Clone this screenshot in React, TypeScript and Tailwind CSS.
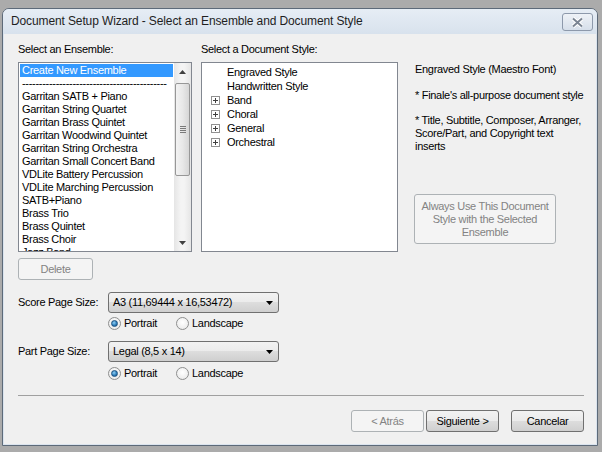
import React from "react";

/* ================== DATA ================== */
const ensembles = [
  "Create New Ensemble",
  "-------------------------------------------",
  "Garritan SATB + Piano",
  "Garritan String Quartet",
  "Garritan Brass Quintet",
  "Garritan Woodwind Quintet",
  "Garritan String Orchestra",
  "Garritan Small Concert Band",
  "VDLite Battery Percussion",
  "VDLite Marching Percussion",
  "SATB+Piano",
  "Brass Trio",
  "Brass Quintet",
  "Brass Choir",
  "Jazz Band",
];

const styles = [
  { name: "Engraved Style", group: false },
  { name: "Handwritten Style", group: false },
  { name: "Band", group: true },
  { name: "Choral", group: true },
  { name: "General", group: true },
  { name: "Orchestral", group: true },
];

const btnFace =
  "bg-[linear-gradient(180deg,#f2f2f2_0%,#ebebeb_49%,#dddddd_50%,#cfcfcf_100%)] border border-[#707070] rounded-[3px]";
const btnDisabled = "bg-[#f4f4f4] border border-[#adb2b5] rounded-[3px] text-[#838383]";

/* ================== PIECES ================== */
const Radio: React.FC<{ checked?: boolean; label: string; className?: string }> = ({ checked, label, className }) => (
  <div className={"flex items-center h-[13px] " + (className ?? "")}>
    <div className="w-[13px] h-[13px] rounded-full border border-[#8e8f8f] bg-[radial-gradient(circle_at_50%_40%,#ffffff,#e6e6e6)] flex items-center justify-center">
      {checked && (
        <div className="w-[7px] h-[7px] rounded-full border border-[#1c5180] bg-[radial-gradient(circle_at_40%_35%,#8fd0f5,#2a7ab8_60%,#155086)]" />
      )}
    </div>
    <span className="ml-[3px]">{label}</span>
  </div>
);

const Combo: React.FC<{ value: string }> = ({ value }) => (
  <div className="w-[171px] h-[21px] border border-[#707070] rounded-[3px] bg-[linear-gradient(180deg,#f2f2f2_0%,#ebebeb_49%,#dddddd_50%,#cfcfcf_100%)] flex items-center pl-[4px] pr-[5px]">
    <span className="flex-1">{value}</span>
    <svg width="7" height="4" viewBox="0 0 7 4">
      <path d="M0 0h7L3.5 4z" fill="#000" />
    </svg>
  </div>
);

/* ================== COMPONENT ================== */
const App: React.FC = () => {
  return (
    <div className="w-[602px] h-[452px] bg-[#ababab] pt-[8px] pl-[2px] overflow-hidden font-['Liberation_Sans',Arial,sans-serif] text-[11px] leading-[13px] tracking-[-0.3px] text-black">
      <div className="w-[596px] h-[438px] border border-[#5d6a79] rounded-t-[7px] flex flex-col bg-[#dbe4ee] overflow-hidden">
        {/* Title bar */}
        <div className="h-[25px] shrink-0 flex items-start bg-[linear-gradient(180deg,#e6edf5,#d8e2ed)]">
          <span className="pl-[8px] pt-[5px] text-[12px] leading-[15px] tracking-[-0.12px] text-[#1e1e1e] flex-1">
            Document Setup Wizard - Select an Ensemble and Document Style
          </span>
          <div className="mt-[4px] mr-[4px] w-[31px] h-[18px] rounded-[3px] border border-[#8d99ab] bg-[linear-gradient(180deg,#eef2f7,#d6dfea)] flex items-center justify-center">
            <svg width="13" height="11" viewBox="0 0 13 11">
              <path d="M2 1.5l4.5 4 4.5-4M2 9.5l4.5-4 4.5 4" stroke="#ffffff" strokeWidth="4" fill="none" />
              <path d="M2 1.5l4.5 4 4.5-4M2 9.5l4.5-4 4.5 4" stroke="#7b8593" strokeWidth="2" fill="none" />
            </svg>
          </div>
        </div>

        {/* Body */}
        <div className="flex-1 mx-[1px] mb-[1px] bg-[#f0f0f0] pl-[14px] pt-[9px] flex flex-col">
          {/* Labels */}
          <div className="flex h-[13px]">
            <span className="w-[183px]">Select an Ensemble:</span>
            <span>Select a Document Style:</span>
          </div>

          {/* Top row */}
          <div className="flex mt-[6px] h-[190px]">
            {/* Ensemble list */}
            <div className="w-[174px] h-[190px] border border-[#828790] bg-white flex">
              <div className="flex-1 p-[1px] overflow-hidden">
                {ensembles.map((e, i) => (
                  <div
                    key={i}
                    className={"h-[13px] pl-[2px] whitespace-nowrap overflow-hidden " + (i === 0 ? "bg-[#3399ff] text-white" : "")}
                  >
                    {e}
                  </div>
                ))}
              </div>
              {/* Scrollbar */}
              <div className="w-[17px] bg-[linear-gradient(90deg,#e5e5e5,#f4f4f4_40%,#f4f4f4_60%,#e5e5e5)] flex flex-col items-center">
                <div className="h-[17px] w-full flex items-center justify-center">
                  <svg width="7" height="4" viewBox="0 0 7 4">
                    <path d="M3.5 0L7 4H0z" fill="#404040" />
                  </svg>
                </div>
                <div className="mt-[3px] w-[15px] h-[93px] rounded-[2px] border border-[#979797] bg-[linear-gradient(90deg,#f3f3f3,#e8e8e8_50%,#d6d6d6)] flex flex-col items-center justify-center gap-[1px]">
                  {[0, 1, 2, 3].map((g) => (
                    <div key={g} className="w-[6px] h-[1px] bg-[#7a7a7a]" />
                  ))}
                </div>
                <div className="flex-1" />
                <div className="h-[17px] w-full flex items-center justify-center">
                  <svg width="7" height="4" viewBox="0 0 7 4">
                    <path d="M0 0h7L3.5 4z" fill="#404040" />
                  </svg>
                </div>
              </div>
            </div>

            {/* Style tree */}
            <div className="ml-[9px] w-[197px] h-[190px] border border-[#828790] bg-white pt-[2px]">
              {styles.map((s) => (
                <div key={s.name} className="h-[14px] flex items-center pl-[9px]">
                  {s.group ? (
                    <div className="w-[9px] h-[9px] border border-[#919191] flex items-center justify-center relative">
                      <div className="w-[5px] h-[1px] bg-[#404040]" />
                      <div className="absolute w-[1px] h-[5px] bg-[#404040]" />
                    </div>
                  ) : (
                    <div className="w-[9px]" />
                  )}
                  <span className="ml-[7px]">{s.name}</span>
                </div>
              ))}
            </div>

            {/* Description */}
            <div className="ml-[17px] flex flex-col">
              <div className="mt-[1px]">Engraved Style (Maestro Font)</div>
              <div className="mt-[13px]">* Finale's all-purpose document style</div>
              <div className="mt-[12px]">
                * Title, Subtitle, Composer, Arranger,
                <br />
                Score/Part, and Copyright text
                <br />
                inserts
              </div>
              <div className={"mt-[41px] -ml-[1px] w-[142px] h-[50px] flex items-center justify-center text-center " + btnDisabled}>
                Always Use This Document
                <br />
                Style with the Selected
                <br />
                Ensemble
              </div>
            </div>
          </div>

          {/* Delete */}
          <div className={"mt-[6px] w-[75px] h-[22px] flex items-center justify-center " + btnDisabled}>Delete</div>

          {/* Score page size */}
          <div className="mt-[12px] flex items-center">
            <span className="w-[90px]">Score Page Size:</span>
            <Combo value="A3 (11,69444 x 16,53472)" />
          </div>
          <div className="mt-[4px] ml-[90px] flex">
            <Radio checked label="Portrait" className="w-[68px]" />
            <Radio label="Landscape" />
          </div>

          {/* Part page size */}
          <div className="mt-[11px] flex items-center">
            <span className="w-[90px]">Part Page Size:</span>
            <Combo value="Legal (8,5 x 14)" />
          </div>
          <div className="mt-[5px] ml-[90px] flex">
            <Radio checked label="Portrait" className="w-[68px]" />
            <Radio label="Landscape" />
          </div>

          {/* Separator */}
          <div className="mt-[15px] w-[566px] h-[1px] bg-[#a0a0a0]" />

          {/* Footer buttons */}
          <div className="mt-[14px] w-[566px] flex justify-end">
            <div className={"w-[73px] h-[22px] flex items-center justify-center " + btnDisabled}>&lt; Atrás</div>
            <div className={"ml-[2px] w-[73px] h-[22px] flex items-center justify-center " + btnFace}>Siguiente &gt;</div>
            <div className={"ml-[12px] w-[73px] h-[22px] flex items-center justify-center " + btnFace}>Cancelar</div>
          </div>
        </div>
      </div>
    </div>
  );
};

export default App;
